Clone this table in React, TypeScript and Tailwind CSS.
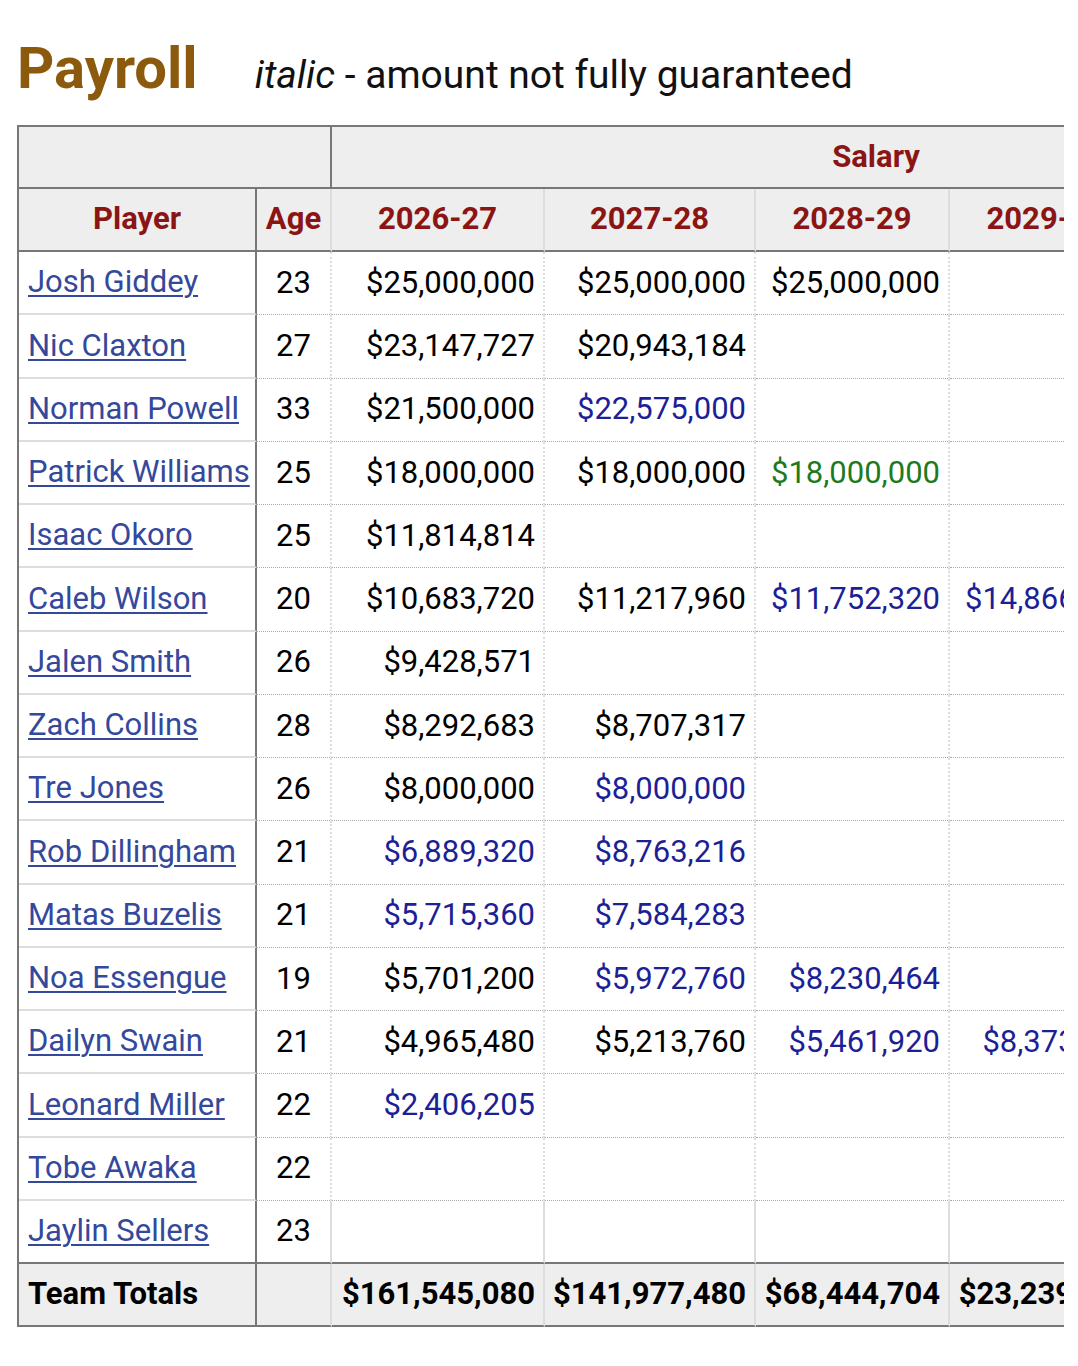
type Tone = "n" | "b" | "g";
type Amount = [string, Tone] | null;

const rows: { name: string; age: number; pay: Amount[] }[] = [
  { name: "Josh Giddey", age: 23, pay: [["$25,000,000", "n"], ["$25,000,000", "n"], ["$25,000,000", "n"], null, null] },
  { name: "Nic Claxton", age: 27, pay: [["$23,147,727", "n"], ["$20,943,184", "n"], null, null, null] },
  { name: "Norman Powell", age: 33, pay: [["$21,500,000", "n"], ["$22,575,000", "b"], null, null, null] },
  { name: "Patrick Williams", age: 25, pay: [["$18,000,000", "n"], ["$18,000,000", "n"], ["$18,000,000", "g"], null, null] },
  { name: "Isaac Okoro", age: 25, pay: [["$11,814,814", "n"], null, null, null, null] },
  { name: "Caleb Wilson", age: 20, pay: [["$10,683,720", "n"], ["$11,217,960", "n"], ["$11,752,320", "b"], ["$14,866,180", "b"], null] },
  { name: "Jalen Smith", age: 26, pay: [["$9,428,571", "n"], null, null, null, null] },
  { name: "Zach Collins", age: 28, pay: [["$8,292,683", "n"], ["$8,707,317", "n"], null, null, null] },
  { name: "Tre Jones", age: 26, pay: [["$8,000,000", "n"], ["$8,000,000", "b"], null, null, null] },
  { name: "Rob Dillingham", age: 21, pay: [["$6,889,320", "b"], ["$8,763,216", "b"], null, null, null] },
  { name: "Matas Buzelis", age: 21, pay: [["$5,715,360", "b"], ["$7,584,283", "b"], null, null, null] },
  { name: "Noa Essengue", age: 19, pay: [["$5,701,200", "n"], ["$5,972,760", "b"], ["$8,230,464", "b"], null, null] },
  { name: "Dailyn Swain", age: 21, pay: [["$4,965,480", "n"], ["$5,213,760", "n"], ["$5,461,920", "b"], ["$8,373,130", "b"], null] },
  { name: "Leonard Miller", age: 22, pay: [["$2,406,205", "b"], null, null, null, null] },
  { name: "Tobe Awaka", age: 22, pay: [null, null, null, null, null] },
  { name: "Jaylin Sellers", age: 23, pay: [null, null, null, null, null] },
];

const seasons = ["2026-27", "2027-28", "2028-29", "2029-30", "2030-31"];
const totals = ["$161,545,080", "$141,977,480", "$68,444,704", "$23,239,310", ""];

const toneClass: Record<Tone, string> = {
  n: "text-black",
  b: "text-[#1c1f96]",
  g: "text-[#1d7a1d]",
};

export default function App() {
  return (
    <div className="min-h-screen bg-white font-['Roboto',sans-serif] text-black">
      <div className="px-[17px] pt-[40px]">
        <div className="mb-[22px] flex items-baseline gap-[57px]">
          <h1 className="text-[58px] font-bold leading-[56px] text-[#8c5a0c]">Payroll</h1>
          <p className="text-[39px] leading-[56px] text-[#111]">
            <span className="italic">italic</span> - amount not fully guaranteed
          </p>
        </div>

        <div className="w-[1047px] overflow-hidden">
          <table className="w-[1403px] table-fixed border-separate border-spacing-0 border-l-2 border-t-2 border-[#777]">
            <colgroup>
              <col className="w-[238px]" />
              <col className="w-[75px]" />
              <col className="w-[213px]" />
              <col className="w-[211px]" />
              <col className="w-[194px]" />
              <col className="w-[194px]" />
              <col className="w-[276px]" />
            </colgroup>
            <thead>
              <tr>
                <th colSpan={2} className="h-[62px] border-b-2 border-r-2 border-[#777] bg-[#eeeeee]" />
                <th colSpan={5} className="h-[62px] border-b-2 border-[#777] bg-[#eeeeee] text-center text-[31px] font-bold text-[#8b1414]">
                  Salary
                </th>
              </tr>
              <tr>
                <th className="h-[63px] border-b-2 border-r-2 border-[#777] bg-[#eeeeee] text-center text-[31px] font-bold text-[#8b1414]">
                  Player
                </th>
                <th className="h-[63px] border-b-2 border-r-2 border-b-[#777] border-r-[#dddddd] bg-[#eeeeee] text-center text-[31px] font-bold text-[#8b1414]">
                  Age
                </th>
                {seasons.map((s) => (
                  <th
                    key={s}
                    className="h-[63px] border-b-2 border-r-2 border-b-[#777] border-r-[#dddddd] bg-[#eeeeee] text-center text-[31px] font-bold text-[#8b1414]"
                  >
                    {s}
                  </th>
                ))}
              </tr>
            </thead>
            <tbody>
              {rows.map((r, i) => {
                const last = i === rows.length - 1;
                const rowBorder = last
                  ? "border-b-2 border-solid border-b-[#777]"
                  : "border-b border-dotted border-b-[#aaaaaa]";
                return (
                  <tr key={r.name}>
                    <td
                      className={`h-[63.25px] border-r-2 border-r-[#777] pl-[9px] text-[31px] ${
                        last ? "border-b-2 border-b-[#777]" : "border-b-2 border-b-[#dddddd]"
                      }`}
                    >
                      <a href="#" className="whitespace-nowrap text-[#34489c] underline decoration-2 underline-offset-[3px]">
                        {r.name}
                      </a>
                    </td>
                    <td className={`h-[63.25px] border-r-2 border-r-[#dddddd] text-center text-[31px] ${rowBorder}`}>
                      {r.age}
                    </td>
                    {r.pay.map((p, j) => (
                      <td
                        key={j}
                        className={`h-[63.25px] border-r-2 border-r-[#dddddd] pr-[8px] text-right text-[31px] ${rowBorder} ${
                          p ? toneClass[p[1]] : ""
                        }`}
                      >
                        {p ? p[0] : ""}
                      </td>
                    ))}
                  </tr>
                );
              })}
              <tr>
                <td className="h-[63px] border-b-2 border-r-2 border-[#777] bg-[#eeeeee] pl-[9px] text-[31px] font-bold">
                  Team Totals
                </td>
                <td className="h-[63px] border-b-2 border-r-2 border-b-[#777] border-r-[#dddddd] bg-[#eeeeee]" />
                {totals.map((t, j) => (
                  <td
                    key={j}
                    className="h-[63px] border-b-2 border-r-2 border-b-[#777] border-r-[#dddddd] bg-[#eeeeee] pr-[8px] text-right text-[31px] font-bold"
                  >
                    {t}
                  </td>
                ))}
              </tr>
            </tbody>
          </table>
        </div>
      </div>
    </div>
  );
}
